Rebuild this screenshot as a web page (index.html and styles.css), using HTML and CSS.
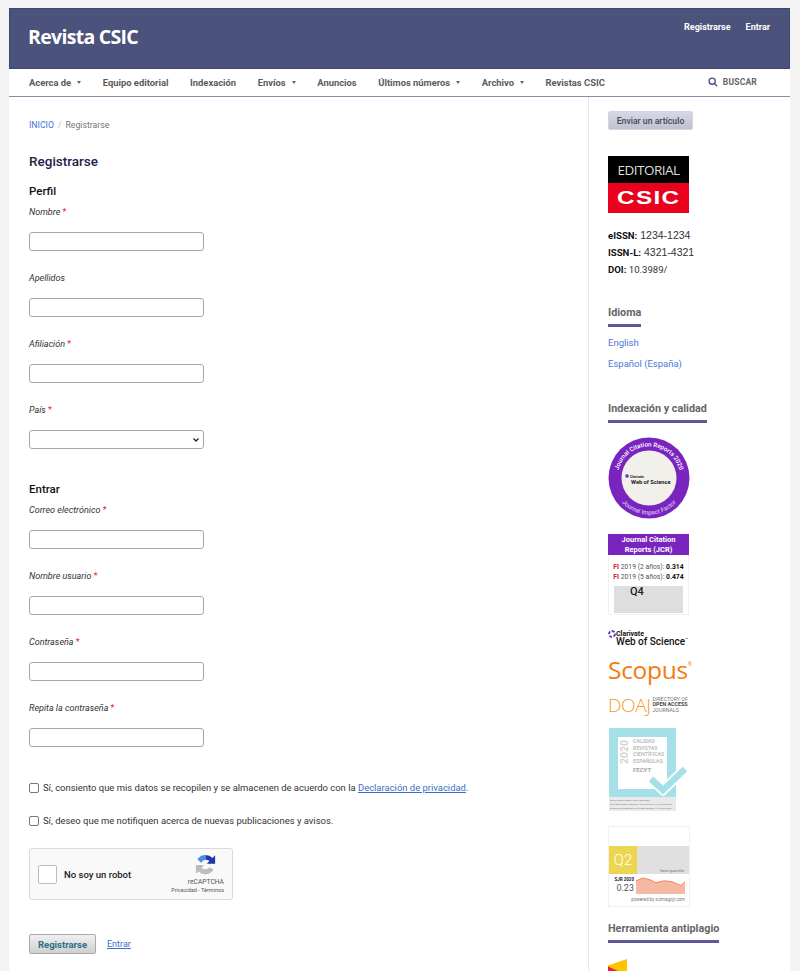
FILE: index.html
```html
<!DOCTYPE html>
<html lang="es">
<head>
<meta charset="utf-8">
<title>Registrarse | Revista CSIC</title>
<link rel="stylesheet" href="styles.css">
</head>
<body>
<div class="page">
  <header class="masthead">
    <a class="site-name">Revista CSIC</a>
    <nav class="user-nav"><a>Registrarse</a><a>Entrar</a></nav>
  </header>
  <nav class="primary-nav">
    <ul class="menu">
      <li class="caret">Acerca de</li>
      <li>Equipo editorial</li>
      <li>Indexación</li>
      <li class="caret">Envíos</li>
      <li>Anuncios</li>
      <li class="caret">Últimos números</li>
      <li class="caret">Archivo</li>
      <li>Revistas CSIC</li>
    </ul>
    <a class="search">
      <svg class="search-icon" viewBox="0 0 12 12" aria-hidden="true"><circle cx="5" cy="5" r="3.7"/><path d="M7.8 7.8 11 11"/></svg>
      BUSCAR
    </a>
  </nav>
  <div class="content">
    <main class="main">
      <div class="breadcrumb"><a>INICIO</a><span class="sep">/</span><span>Registrarse</span></div>
      <h1>Registrarse</h1>
      <h2 class="first">Perfil</h2>
      <div class="field"><label>Nombre <em>*</em></label><input type="text"></div>
      <div class="field"><label>Apellidos</label><input type="text"></div>
      <div class="field"><label>Afiliación <em>*</em></label><input type="text"></div>
      <div class="field"><label>País <em>*</em></label><select><option></option></select></div>
      <h2 class="second">Entrar</h2>
      <div class="field"><label>Correo electrónico <em>*</em></label><input type="text"></div>
      <div class="field"><label>Nombre usuario <em>*</em></label><input type="text"></div>
      <div class="field"><label>Contraseña <em>*</em></label><input type="text"></div>
      <div class="field"><label>Repita la contraseña <em>*</em></label><input type="text"></div>
      <div class="checks">
        <label class="check"><span class="box"></span>Sí, consiento que mis datos se recopilen y se almacenen de acuerdo con la <a>Declaración de privacidad</a>.</label>
        <label class="check"><span class="box"></span>Sí, deseo que me notifiquen acerca de nuevas publicaciones y avisos.</label>
      </div>
      <div class="recaptcha">
        <span class="rc-box"></span>
        <span class="rc-label">No soy un robot</span>
        <div class="rc-brand">
          <svg class="rc-logo" viewBox="0 0 24 24" aria-hidden="true">
            <path fill="#4a90e2" d="M12 1A11 11 0 0 0 2.800 6L7 10A6.500 6.500 0 0 1 12 6.500z"/>
            <path fill="#1c3aa9" d="M12 1A11 11 0 0 1 20 4.500L23 1.500V11H13.500L16.500 8A6.500 6.500 0 0 0 12 6.500z"/>
            <path fill="#bdbdbd" d="M1 12.500H10.500L7.500 16A6.500 6.500 0 0 0 12 17.500A6.500 6.500 0 0 0 17 15L21.200 18A11 11 0 0 1 4 20L1 22.500z"/>
          </svg>
          <span class="rc-name">reCAPTCHA</span>
          <span class="rc-terms">Privacidad - Términos</span>
        </div>
      </div>
      <div class="actions"><button class="submit" type="button">Registrarse</button><a class="login">Entrar</a></div>
    </main>
    <aside class="sidebar">
      <a class="submit-article">Enviar un artículo</a>
      <div class="editorial">
        <span class="ed-top">EDITORIAL</span>
        <span class="ed-bottom"><span class="ed-word">CSIC</span></span>
      </div>
      <div class="ids">
        <p><b>eISSN:</b> 1234-1234</p>
        <p><b>ISSN-L:</b> 4321-4321</p>
        <p class="doi"><b>DOI:</b> 10.3989/</p>
      </div>
      <h3 class="block-title idioma">Idioma</h3>
      <a class="lang">English</a>
      <a class="lang">Español (España)</a>
      <h3 class="block-title index">Indexación y calidad</h3>
      <svg class="badge jcr-seal" viewBox="0 0 82 82" aria-label="Journal Citation Reports 2020">
        <defs>
          <path id="arcTop" d="M10.800 50A31.500 31.500 0 1 1 71.200 50"/>
          <path id="arcBottom" d="M5.600 50A36.500 36.500 0 0 0 76.400 50"/>
        </defs>
        <circle cx="41" cy="41" r="40.500" fill="#7a24c0"/>
        <circle cx="41" cy="41" r="27.500" fill="#f1f0ea"/>
        <text class="seal-arc"><textPath href="#arcTop" startOffset="50%" text-anchor="middle">Journal Citation Reports 2020</textPath></text>
        <text class="seal-arc dim"><textPath href="#arcBottom" startOffset="50%" text-anchor="middle">Journal Impact Factor</textPath></text>
        <circle cx="19" cy="39" r="1.800" fill="#5e33bf"/>
        <text x="22" y="40.500" class="seal-small">Clarivate</text>
        <text x="23" y="47" class="seal-wos">Web of Science</text>
      </svg>
      <div class="badge jcr-card">
        <div class="jcr-head">Journal Citation<br>Reports (JCR)</div>
        <div class="jcr-line"><i>FI</i> 2019 (2 años): <b>0.314</b></div>
        <div class="jcr-line"><i>FI</i> 2019 (5 años): <b>0.474</b></div>
        <div class="jcr-q">Q4</div>
      </div>
      <div class="wos"><span class="wos-top"><svg class="wos-mark" viewBox="0 0 8 8" aria-hidden="true"><circle cx="4" cy="4" r="3" fill="none" stroke="#5e33bf" stroke-width="1.800" stroke-dasharray="3 1.500"/></svg>Clarivate</span><span class="wos-main">Web of Science<sup>™</sup></span></div>
      <div class="scopus">Scopus<sup>®</sup></div>
      <div class="doaj"><span class="doaj-mark">DOAJ</span><span class="doaj-text">DIRECTORY OF<br><b>OPEN ACCESS</b><br>JOURNALS</span></div>
      <div class="fecyt">
        <div class="fecyt-frame">
          <div class="fecyt-inner">
            <span class="fecyt-year">2020</span>
            <span class="fecyt-text">CALIDAD<br>REVISTAS<br>CIENTÍFICAS<br>ESPAÑOLAS<br><b>FECYT</b></span>
          </div>
          <svg class="fecyt-check" viewBox="0 0 42 32" aria-hidden="true">
            <path d="M3 15 15 26 37 5" fill="none" stroke="#fff" stroke-width="10"/>
            <path d="M3 15 15 26 37 5" fill="none" stroke="#a5e0e8" stroke-width="6.500"/>
          </svg>
        </div>
        <div class="fecyt-foot">SELLO CERTIFICADO: FECYT-000/2020<br>FECHA DE CERTIFICACIÓN: 13 de julio 2019 (7 convocatoria)<br>ESTA CERTIFICACIÓN ES VÁLIDA HASTA EL: 13 de julio 2021</div>
      </div>
      <div class="sjr">
        <div class="sjr-band"><span class="sjr-q">Q2</span><span class="sjr-best">best quartile</span></div>
        <div class="sjr-data">
          <div class="sjr-val"><b>SJR 2020</b><span>0.23</span></div>
          <svg class="sjr-chart" viewBox="0 0 49 18" preserveAspectRatio="none" aria-hidden="true">
            <path fill="#f6b8a3" d="M0 4 7 1 14 3 20 6 28 4 36 5 45 9 49 5V18H0z"/>
            <path fill="none" stroke="#f0835c" stroke-width="1" d="M0 4 7 1 14 3 20 6 28 4 36 5 45 9 49 5"/>
          </svg>
        </div>
        <div class="sjr-foot">powered by scimagojr.com</div>
      </div>
      <h3 class="block-title plag">Herramienta antiplagio</h3>
      <svg class="plag-logo" viewBox="0 0 20 12" aria-hidden="true">
        <path fill="#fdc400" d="M0 6.500 19 0V12H0z"/>
        <path fill="#e5213c" d="M0 7.500 10 12H0z"/>
      </svg>
    </aside>
  </div>
</div>
</body>
</html>
```

FILE: styles.css
```css
* { box-sizing: border-box; }
html, body { margin: 0; height: 971px; overflow: hidden; }
body { background: #f3f3f3; font-family: Roboto, "Liberation Sans", sans-serif; color: #222; padding: 8px 10px 0 9px; }
a { text-decoration: none; color: inherit; }
p, ul, h1, h2, h3 { margin: 0; padding: 0; }

.page { background: #fff; height: 963px; overflow: hidden; }

.masthead { height: 61px; background: #4b527b; border: 1px solid #3f4672; padding: 0 19px 0 18px; display: flex; justify-content: space-between; }
.site-name { font-family: "Open Sans", sans-serif; font-weight: 700; font-size: 19.500px; letter-spacing: -.7px; line-height: 56px; color: #fff; }
.user-nav { display: flex; gap: 15px; padding-top: 13px; font-size: 9px; font-weight: 700; color: #fff; }

.primary-nav { height: 28px; border-bottom: 1px solid #8d88a8; display: flex; justify-content: space-between; align-items: center; padding: 0 33px 1px 20px; font-size: 9.400px; font-weight: 700; color: #5b5b5b; }
.menu { list-style: none; display: flex; gap: 21.600px; }
.caret::after { content: ""; display: inline-block; margin-left: 6px; vertical-align: 2px; border-top: 3px solid #666; border-left: 2.500px solid transparent; border-right: 2.500px solid transparent; }
.search { display: flex; align-items: center; gap: 5px; font-size: 8.500px; color: #666; letter-spacing: .2px; }
.search-icon { width: 10px; height: 10px; fill: none; stroke: #4f4d8c; stroke-width: 1.600; }

.content { display: flex; height: 874px; }
.main { width: 580px; padding: 22px 0 0 20px; border-right: 1px solid #e6e6e6; }
.sidebar { flex: 1; padding: 14px 0 0 19px; display: flex; flex-direction: column; align-items: flex-start; }

.breadcrumb { display: flex; font-size: 8.700px; line-height: 12px; color: #777; }
.breadcrumb a { color: #3f74d6; }
.sep { margin: 0 4px; color: #bbb; }
h1 { font-size: 13.500px; font-weight: 500; line-height: 16px; color: #1e2347; margin-top: 22px; }
h2 { font-size: 11.500px; font-weight: 500; line-height: 14px; color: #111; margin-bottom: 1px; }
h2.first { margin-top: 15px; }
h2.second { margin-top: 19px; }
.field { height: 66px; padding-top: 7px; }
.field label { display: block; font-size: 9px; font-style: italic; line-height: 12px; color: #333; height: 26px; }
.field em { color: #e22; font-style: normal; }
.field input, .field select { display: block; width: 175px; height: 19px; border: 1px solid #a8a8a8; border-radius: 3px; background: #fff; padding: 0; }
.field select { appearance: none; background: #fff url("data:image/svg+xml,%3Csvg xmlns='http://www.w3.org/2000/svg' width='6' height='4'%3E%3Cpath d='M.5.5 3 3 5.500.5' fill='none' stroke='%23222' stroke-width='1.300'/%3E%3C/svg%3E") no-repeat right 4px center; }

.checks { padding-top: 20px; display: flex; flex-direction: column; gap: 20px; }
.check { display: flex; align-items: center; font-size: 9.450px; line-height: 13px; color: #333; white-space: pre-wrap; }
.check a { color: #3a6fc7; text-decoration: underline; }
.box { width: 10px; height: 10px; border: 1px solid #777; border-radius: 2px; margin-right: 4px; }

.recaptcha { width: 204px; height: 52px; margin-top: 21px; background: #f9f9f9; border: 1px solid #d9d9d9; border-radius: 3px; display: flex; align-items: center; padding: 0 8px; }
.rc-box { width: 19px; height: 19px; background: #fff; border: 1px solid #bdbdbd; border-radius: 2px; }
.rc-label { margin-left: 7px; font-size: 9.500px; font-weight: 500; color: #222; }
.rc-brand { margin-left: auto; display: flex; flex-direction: column; align-items: flex-end; width: 56px; }
.rc-logo { width: 21px; height: 21px; margin: 0 8px 3px 0; }
.rc-name { font-size: 6.700px; line-height: 8px; color: #555; }
.rc-terms { font-size: 5.500px; line-height: 8px; color: #555; white-space: nowrap; }

.actions { margin-top: 34px; display: flex; align-items: center; gap: 11px; }
.submit { width: 67px; height: 20px; padding: 0; border: 1px solid #aaa; border-radius: 2px; background: linear-gradient(#f0f0f0, #cfcfcf); font: 700 9.500px Roboto, sans-serif; color: #2b6f88; }
.login { font-size: 9px; color: #3a6fc7; text-decoration: underline; }

.submit-article { width: 85px; height: 19px; line-height: 18px; text-align: center; font-size: 8.700px; font-weight: 500; color: #44465a; background: linear-gradient(#d6d8e3, #bfc2cf); border: 1px solid #d4d5de; border-radius: 2px; }
.editorial { width: 81px; margin-top: 26px; display: flex; flex-direction: column; }
.ed-top { height: 27px; background: #000; color: #ddd; font: 400 13.500px/28px "Open Sans", sans-serif; text-align: center; letter-spacing: -.5px; }
.ed-bottom { height: 30px; background: #e8001c; text-align: center; }
.ed-word { display: inline-block; color: #fff; font: 700 19px/30px "Liberation Sans", sans-serif; letter-spacing: 1px; transform: scaleX(1.28); }
.ids { margin-top: 14px; font-family: "Liberation Sans", sans-serif; font-size: 10.500px; line-height: 17px; color: #333; }
.ids b { font-family: Roboto, sans-serif; color: #111; font-size: 9.600px; }
.doi { font-family: Roboto, sans-serif; font-size: 9.600px; }

.block-title { font-size: 10.800px; font-weight: 700; line-height: 14px; color: #666; padding-bottom: 4px; border-bottom: 3px solid #5c5799; }
.idioma { margin-top: 28px; }
.lang { font-size: 9.500px; line-height: 12px; color: #4d78d6; margin-top: 9px; }
.idioma + .lang { margin-top: 10px; }
.index { margin-top: 32px; }

.badge { flex: none; }
.jcr-seal { width: 82px; height: 82px; margin-top: 14px; }
.seal-arc { font: 500 6.200px Roboto, sans-serif; fill: #fff; }
.seal-arc.dim { fill: #d5bdf0; font-size: 6.200px; }
.seal-small { font: 700 3.500px Roboto, sans-serif; fill: #222; }
.seal-wos { font: 700 5.700px Roboto, sans-serif; fill: #222; }

.jcr-card { width: 81px; height: 81px; margin-top: 15px; border: 1px solid #f2f2f2; border-top: 0; }
.jcr-head { margin: 0 -1px; height: 21px; background: #7a24c0; color: #fff; font-size: 7.500px; font-weight: 700; line-height: 10px; text-align: center; padding-top: 1px; }
.jcr-line { font-size: 6.800px; line-height: 10px; text-align: center; color: #555; white-space: nowrap; }
.jcr-head + .jcr-line { margin-top: 7px; }
.jcr-line i { font-style: normal; font-weight: 700; color: #c22; }
.jcr-line b { color: #111; }
.jcr-q { margin: 4px 5px 0; height: 27px; background: #dedede; font-size: 11px; font-weight: 500; line-height: 12px; padding-left: 16px; color: #222; }

.wos { margin-top: 15px; display: flex; flex-direction: column; color: #111; }
.wos-top { display: flex; align-items: center; gap: 0; font-size: 7px; font-weight: 700; line-height: 7px; }
.wos-mark { width: 8px; height: 8px; }
.wos-main { font-size: 10px; font-weight: 500; line-height: 10px; padding-left: 8px; margin-top: -1px; white-space: nowrap; }
.wos-main sup { font-size: 4px; line-height: 0; }
.scopus { margin-top: 8px; font: 400 24.500px/29px "Open Sans", sans-serif; color: #f47c0c; letter-spacing: -.3px; }
.scopus sup { font-size: 5px; vertical-align: 13px; line-height: 0; }
.doaj { margin-top: 13px; display: flex; align-items: center; gap: 2px; height: 16px; }
.doaj-mark { font: 300 19px/16px "Open Sans", sans-serif; color: #f39c1f; letter-spacing: -.4px; }
.doaj-text { font-size: 5.300px; line-height: 5.200px; color: #777; white-space: nowrap; }
.doaj-text b { color: #444; }

.fecyt { margin-top: 15px; width: 81px; }
.fecyt-frame { position: relative; height: 69px; width: 67px; background: #a5e0e8; padding: 9px 9px 0; margin-left: 1px; }
.fecyt-inner { background: #fff; height: 52px; display: flex; gap: 3px; padding: 1px 2px; }
.fecyt-year { writing-mode: vertical-rl; transform: rotate(180deg); font-size: 10.500px; font-weight: 700; color: #d4d4d4; line-height: 10px; text-align: center; height: 28px; }
.fecyt-text { font-size: 5.300px; line-height: 6.500px; font-weight: 700; color: #c0c0c0; white-space: nowrap; }
.fecyt-text b { display: inline-block; margin-top: 3px; color: #aaa; font-size: 6px; }
.fecyt-check { position: absolute; left: 39px; top: 36px; width: 42px; height: 32px; }
.fecyt-foot { width: 67px; height: 14px; margin-left: 1px; background: #e9e9e9; font-size: 2.300px; line-height: 4px; color: #777; padding: 2px 1px; white-space: nowrap; overflow: hidden; }

.sjr { width: 82px; height: 81px; margin-top: 15px; border: 1px solid #f0f0f0; }
.sjr-band { margin-top: 19px; height: 28px; background: #e0e0e0; display: flex; justify-content: space-between; align-items: flex-end; }
.sjr-q { width: 28px; height: 28px; background: #ecd54f; color: #fff; font-size: 15px; font-weight: 300; line-height: 28px; text-align: center; }
.sjr-best { font-size: 4.300px; line-height: 7px; color: #777; padding-right: 5px; }
.sjr-data { display: flex; height: 21px; padding: 3px 4px 0 5px; justify-content: space-between; }
.sjr-val { display: flex; flex-direction: column; align-items: flex-end; width: 20px; }
.sjr-val b { font-size: 4.500px; line-height: 6px; color: #222; white-space: nowrap; }
.sjr-val span { font-size: 9px; line-height: 11px; color: #555; }
.sjr-chart { width: 49px; height: 17px; }
.sjr-foot { font-size: 4.500px; line-height: 10px; color: #777; text-align: right; padding-right: 4px; white-space: nowrap; }

.plag { margin-top: 15px; }
.plag-logo { width: 20px; height: 12px; margin-top: 16px; flex: none; }
```
